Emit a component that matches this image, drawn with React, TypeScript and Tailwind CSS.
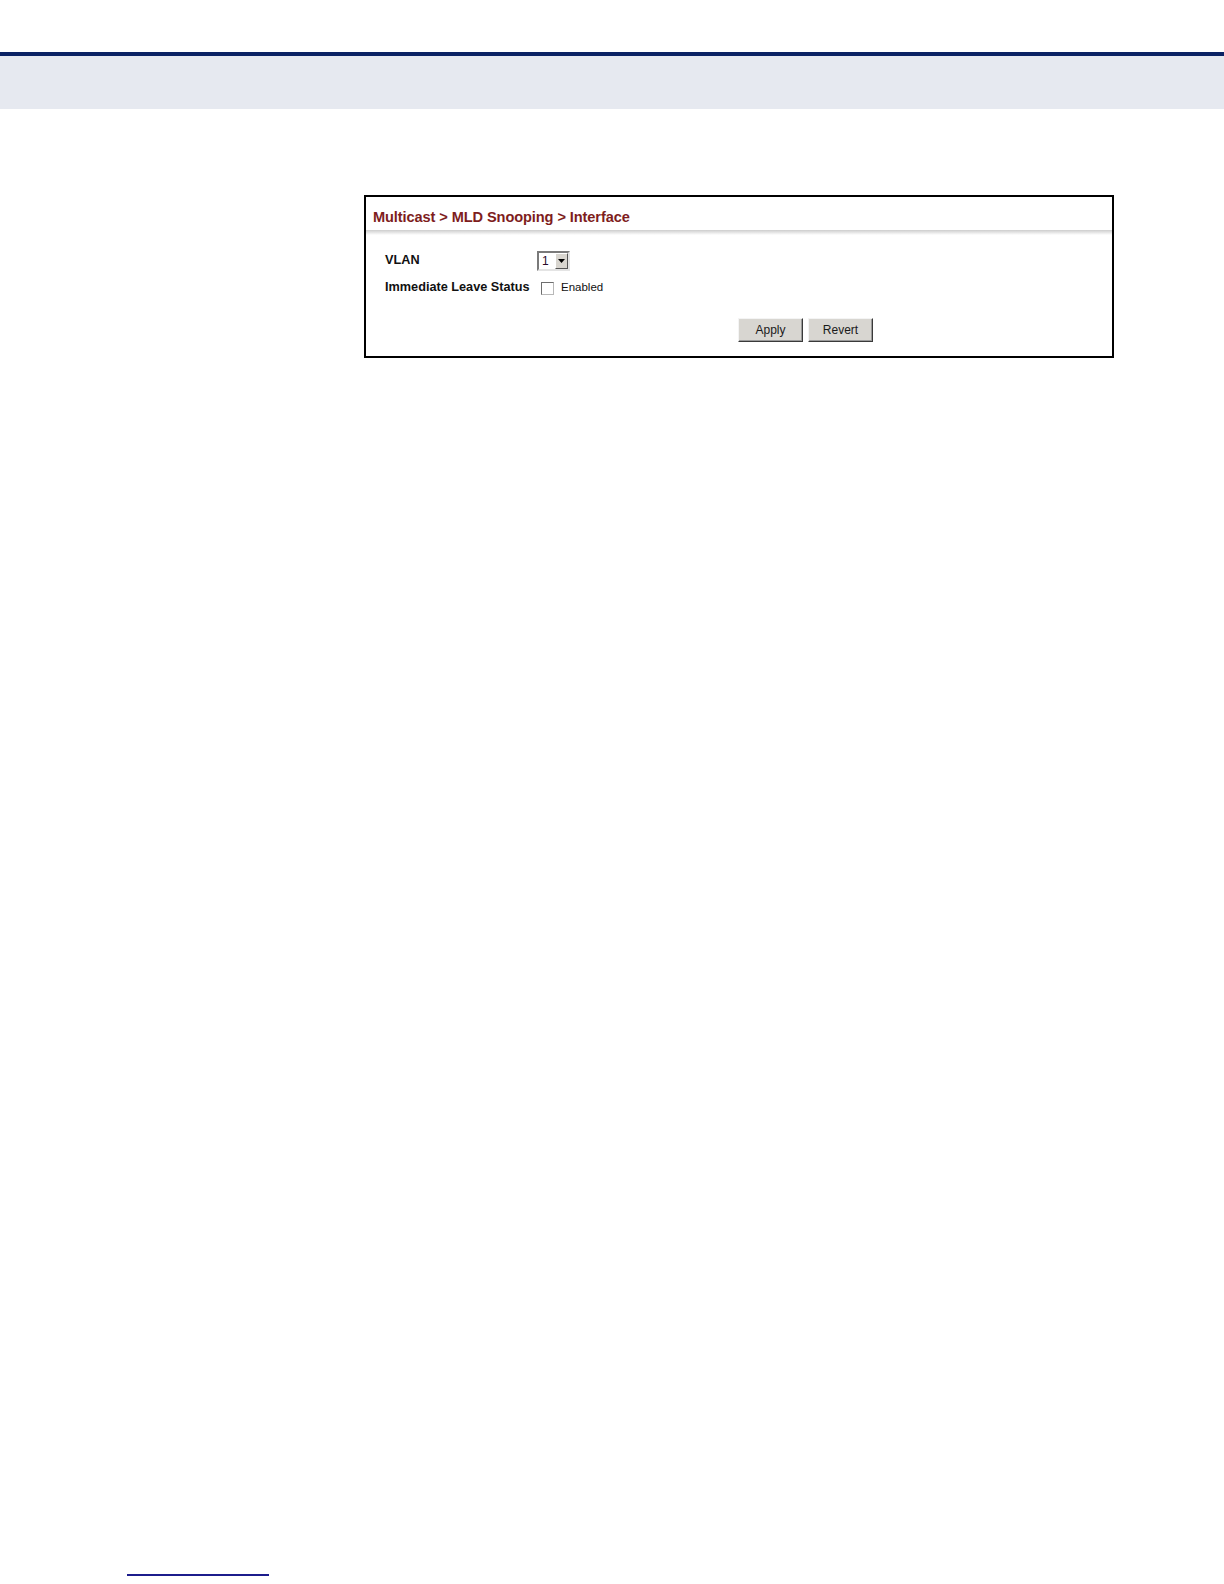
import React from "react";

const Select = () => (
    <div className="flex h-[20px] w-[33px] border-2 border-t-[#7a7a7a] border-l-[#7a7a7a] border-r-[#e4e4e4] border-b-[#e4e4e4] bg-white">
        <div className="flex flex-1 items-center pl-[3px] text-[12px] leading-none text-[#2a0a2a]">1</div>
        <div className="flex w-[13px] items-center justify-center border border-t-white border-l-white border-r-[#555] border-b-[#555] bg-[#d8d5cf]">
            <svg width="7" height="4" viewBox="0 0 7 4">
                <path d="M0 0 H7 L3.5 4 Z" fill="#000" />
            </svg>
        </div>
    </div>
);

const Button = ({ label }: { label: string }) => (
    <button className="flex h-[24px] w-[65px] items-center justify-center border border-t-[#f4f4f4] border-l-[#f4f4f4] border-r-[#3a3a3a] border-b-[#3a3a3a] bg-[#d8d6d1] text-[12px] leading-none text-[#1a1a1a] shadow-[inset_-1px_-1px_0_#9a9a9a]">
        {label}
    </button>
);

export default function App() {
    return (
        <div className="min-h-[1584px] bg-white font-['Liberation_Sans',Arial,sans-serif]">
            <div className="h-[52px]" />
            <div className="h-[4px] bg-[#0b2264]" />
            <div className="h-[53px] bg-[#e6e9f0]" />

            <div className="pl-[364px] pt-[86px]">
                <div className="h-[163px] w-[750px] border-2 border-black bg-white">
                    <div className="flex h-[33px] items-center pl-[7px] pt-[8px]">
                        <span className="text-[14.6px] font-bold tracking-[-0.1px] text-[#7e1d1d]">
                            Multicast &gt; MLD Snooping &gt; Interface
                        </span>
                    </div>
                    <div className="h-[5px] bg-gradient-to-b from-[#cdcdcd] to-white" />

                    <div className="flex flex-col gap-[7px] pl-[19px] pt-[16px]">
                        <div className="flex h-[20px] items-center">
                            <div className="w-[152px] text-[12.7px] font-bold text-[#111]">VLAN</div>
                            <Select />
                        </div>
                        <div className="flex h-[20px] items-center">
                            <div className="w-[152px] text-[12.7px] font-bold text-[#111]">Immediate Leave Status</div>
                            <div className="ml-[4px] h-[13px] w-[13px] border border-t-[#6e6e6e] border-l-[#6e6e6e] border-r-[#b8b8b8] border-b-[#b8b8b8] bg-white" />
                            <span className="ml-[7px] text-[11.5px] text-[#111]">Enabled</span>
                        </div>
                    </div>

                    <div className="mt-[20px] flex gap-[5px] pl-[372px]">
                        <Button label="Apply" />
                        <Button label="Revert" />
                    </div>
                </div>
            </div>

            <div className="ml-[127px] mt-[1216px] h-[2px] w-[142px] bg-[#1c1c8c]" />
        </div>
    );
}
